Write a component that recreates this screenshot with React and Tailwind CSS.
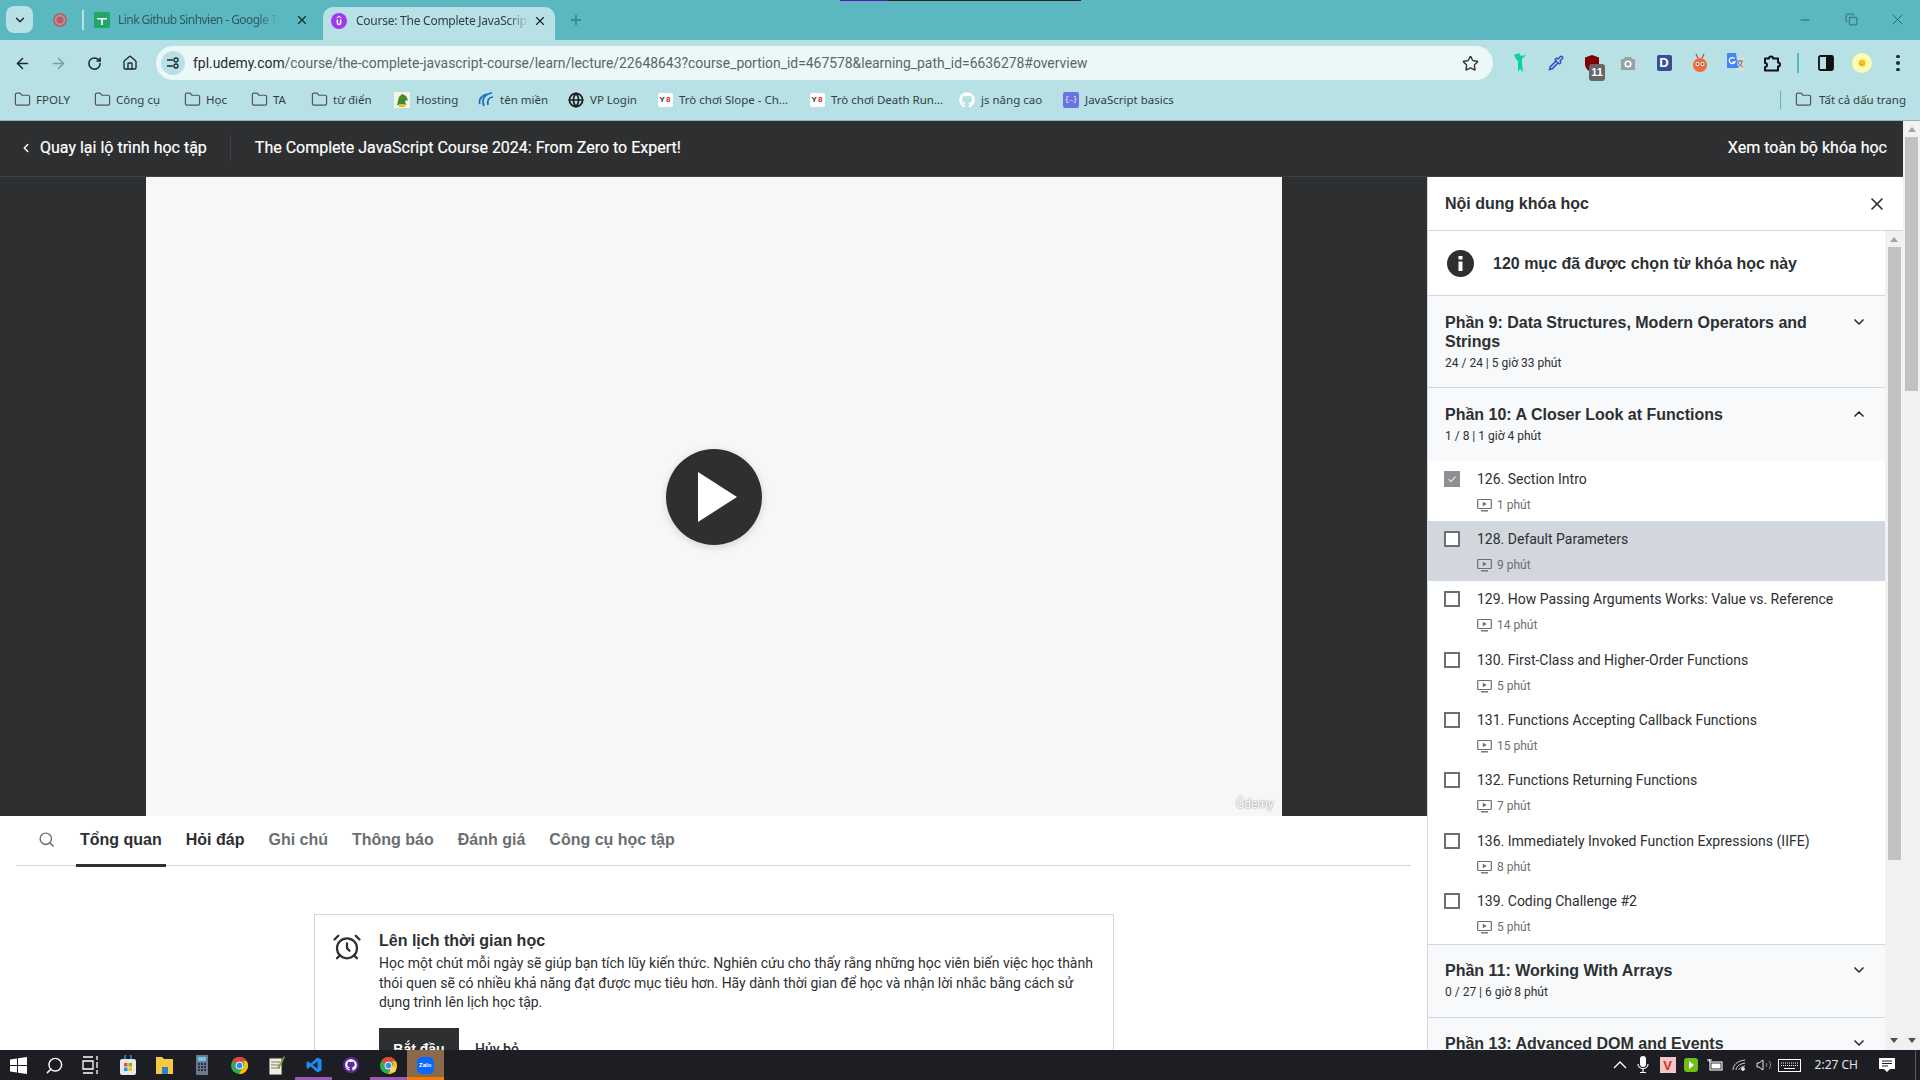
import {
  AlarmClock,
  ArrowLeft,
  ArrowRight,
  ChevronDown,
  ChevronLeft,
  ChevronUp,
  Copy,
  Folder,
  Globe,
  Home,
  Minus,
  Pipette,
  Plus,
  RotateCw,
  Search,
  Star,
  X,
} from "lucide-react";
import { FaGithub } from "react-icons/fa";

const chromeFont = "font-['Noto_Sans',sans-serif]";
const pageFont = "font-['Roboto',sans-serif]";
const boldFont = "font-['Liberation_Sans',sans-serif] font-bold";

// ================= DATA =================

const lessons = [
  { title: "126. Section Intro", time: "1 phút", done: true },
  { title: "128. Default Parameters", time: "9 phút", active: true },
  { title: "129. How Passing Arguments Works: Value vs. Reference", time: "14 phút" },
  { title: "130. First-Class and Higher-Order Functions", time: "5 phút" },
  { title: "131. Functions Accepting Callback Functions", time: "15 phút" },
  { title: "132. Functions Returning Functions", time: "7 phút" },
  { title: "136. Immediately Invoked Function Expressions (IIFE)", time: "8 phút" },
  { title: "139. Coding Challenge #2", time: "5 phút" },
];

const tabs = [
  { name: "Tổng quan", active: true },
  { name: "Hỏi đáp", dark: true },
  { name: "Ghi chú" },
  { name: "Thông báo" },
  { name: "Đánh giá" },
  { name: "Công cụ học tập" },
];

// ================= SMALL ICONS =================

function SheetsIcon() {
  return (
    <svg width="16" height="16" viewBox="0 0 16 16">
      <rect width="16" height="16" rx="1.5" fill="#23a566" />
      <path d="M3 6h10v1.5H8.8V13H7.2V7.5H3z" fill="#fff" />
    </svg>
  );
}

function UdemyTabIcon() {
  return (
    <svg width="16" height="16" viewBox="0 0 16 16">
      <circle cx="8" cy="8" r="8" fill="#a435f0" />
      <path d="M5.6 6.5v3.4a2.4 2.4 0 0 0 4.8 0V6.5h-1.5v3.3a.9.9 0 0 1-1.8 0V6.5z" fill="#fff" />
      <path d="M8 2.8 10.4 4.4v1L8 3.9 5.6 5.4v-1z" fill="#fff" />
    </svg>
  );
}

function RecordIcon() {
  return (
    <svg width="16" height="16" viewBox="0 0 16 16">
      <circle cx="8" cy="8" r="6.2" fill="none" stroke="#e5484d" strokeWidth="1.5" />
      <circle cx="8" cy="8" r="3.6" fill="#e5484d" />
    </svg>
  );
}

function SiteInfoIcon() {
  return (
    <svg width="16" height="16" viewBox="0 0 16 16" fill="none" stroke="#1f2a2c" strokeWidth="1.3">
      <path d="M2 5h6M2 11h6" />
      <circle cx="11" cy="5" r="2" />
      <circle cx="11" cy="11" r="2" />
    </svg>
  );
}

function HostingIcon() {
  return (
    <svg width="16" height="16" viewBox="0 0 16 16">
      <rect width="16" height="16" fill="#f4f4e4" />
      <path d="M3 13 5 5l3-3 4 2 2 4-3 1 1 4z" fill="#3f8a2c" />
      <path d="M5 15h6v-3H5z" fill="#d8c42a" />
    </svg>
  );
}

function DomainIcon() {
  return (
    <svg width="16" height="16" viewBox="0 0 16 16" fill="none" stroke="#1769c2" strokeWidth="1.7">
      <path d="M14 1C7 2 3 7 6 14" />
      <path d="M15 5c-4 0-6 3-5 8" />
      <path d="M9 2C4 3 0 8 2 12" />
    </svg>
  );
}

function Y8Icon() {
  return (
    <span className="flex h-[14px] w-[15px] items-center justify-center gap-[1px] rounded-[2px] bg-white font-['Liberation_Sans',sans-serif] text-[8px] leading-none font-bold">
      <span className="text-[#333]">Y</span>
      <span className="text-[#e2231a]">8</span>
    </span>
  );
}

function JsBasicsIcon() {
  return (
    <span className="flex h-4 w-4 items-center justify-center rounded-[2px] bg-[#6b73e0] font-['Liberation_Mono',monospace] text-[7px] leading-none text-white">
      {"{…}"}
    </span>
  );
}

function UblockIcon() {
  return (
    <span className="relative block h-4 w-4">
      <svg width="16" height="18" viewBox="0 0 16 18">
        <path d="M8 0 15 2.5V9c0 4-3 7-7 9-4-2-7-5-7-9V2.5z" fill="#800000" />
      </svg>
      <span className="absolute top-[9px] left-[5px] flex h-[17px] w-4 items-center justify-center rounded-[3px] bg-[#666] font-['Liberation_Sans',sans-serif] text-[11px] font-bold text-white">
        11
      </span>
    </span>
  );
}

function CameraIcon() {
  return (
    <svg width="16" height="16" viewBox="0 0 16 16">
      <path d="M5 2h6l1 2h3v11H1V4h3z" fill="#9aa0a2" />
      <circle cx="8" cy="9" r="3.6" fill="#fff" />
      <circle cx="8" cy="9" r="2" fill="#9aa0a2" />
    </svg>
  );
}

function DIcon() {
  return (
    <span className="flex h-4 w-[15px] items-center justify-center rounded-[2px] bg-[#35509b] font-['Liberation_Sans',sans-serif] text-[13px] font-bold text-white">
      D
    </span>
  );
}

function BugIcon() {
  return (
    <svg width="16" height="20" viewBox="0 0 16 20">
      <path d="M4 1l2 4M12 1l-2 4" stroke="#c9452a" strokeWidth="1.2" />
      <circle cx="8" cy="12" r="7" fill="#ef6a3d" />
      <circle cx="5.5" cy="11" r="2" fill="#fff" />
      <circle cx="10.5" cy="11" r="2" fill="#fff" />
      <circle cx="5.5" cy="11" r="1" fill="#333" />
      <circle cx="10.5" cy="11" r="1" fill="#333" />
    </svg>
  );
}

function TranslateIcon() {
  return (
    <svg width="18" height="20" viewBox="0 0 18 20">
      <path d="M8 4h9v15l-8-1z" fill="#d7dcdd" />
      <path d="M10 8h6M13 7v1M11 14c2-1 4-3 4-6M11 9c1 2 3 4 5 5" stroke="#6b7173" fill="none" />
      <path d="M0 0h9l2 15H0z" fill="#4285f4" />
      <path d="M7.5 5.5A3 3 0 1 0 8 9H5.5" stroke="#fff" strokeWidth="1.3" fill="none" />
    </svg>
  );
}

function PuzzleIcon() {
  return (
    <svg width="18" height="18" viewBox="0 0 18 18" fill="none" stroke="#111" strokeWidth="2" strokeLinejoin="round">
      <path d="M2 4.5h4a2 2 0 0 1 4 0h5v4a2 2 0 0 1 0 4v4H2V13a2 2 0 0 0 0-4z" />
    </svg>
  );
}

function SidePanelIcon() {
  return (
    <svg width="16" height="16" viewBox="0 0 16 16">
      <rect x="1" y="1" width="14" height="14" rx="1.5" fill="none" stroke="#111" strokeWidth="1.8" />
      <rect x="8" y="1" width="7" height="14" fill="#111" />
    </svg>
  );
}

function AvatarIcon() {
  return (
    <span className="flex h-5 w-5 items-center justify-center rounded-full bg-[#fdfcb4]">
      <svg width="10" height="10" viewBox="0 0 10 10">
        <circle cx="5" cy="5" r="3.5" fill="#f3c31d" />
        <path d="M4 6h2L5 7.5z" fill="#d96f1c" />
      </svg>
    </span>
  );
}

function GreenFigureIcon() {
  return (
    <svg width="14" height="20" viewBox="0 0 14 20">
      <path d="M1 2 6 0l2 3 5-1-4 4v5l1 8-3-3-2 3V8L3 6z" fill="#0bd39c" />
    </svg>
  );
}

function LessonVideoIcon() {
  return (
    <svg width="15" height="14" viewBox="0 0 15 14" fill="none">
      <rect x="0.7" y="1.5" width="13.6" height="9" rx="0.8" stroke="#6a6f73" strokeWidth="1.2" />
      <path d="M5.8 3.8 9.8 6l-4 2.2z" fill="#6a6f73" />
      <path d="M4 12.8h7" stroke="#6a6f73" strokeWidth="1.4" />
    </svg>
  );
}

// ================= BROWSER CHROME =================

function TabStrip() {
  return (
    <div className={`relative flex h-10 items-end bg-[#5cb8c0] pl-[6px] ${chromeFont}`}>
      <div className="absolute top-0 left-[840px] flex h-[1px]">
        <div className="w-12 bg-[#6a0dad]" />
        <div className="w-[193px] bg-[#222]" />
      </div>

      <div className="mb-[7px] flex h-[27px] w-[27px] items-center justify-center rounded-lg bg-[#b7e1e5]">
        <ChevronDown size={14} strokeWidth={2.5} color="#1f2a2c" />
      </div>
      <div className="mb-[7px] ml-[13px] flex h-[27px] w-[27px] items-center justify-center">
        <RecordIcon />
      </div>
      <div className="mb-[10px] ml-[9px] h-[20px] w-[2px] bg-[#b7e1e5]" />
      <div className="mb-[7px] ml-[10px] flex h-[27px] w-[229px] items-center">
        <SheetsIcon />
        <span className="ml-[8px] w-[160px] overflow-hidden text-[12px] tracking-[-0.55px] whitespace-nowrap text-[#2f5a60] [mask-image:linear-gradient(to_right,black_88%,transparent)]">
          Link Github Sinhvien - Google Trang tính
        </span>
        <X size={14} strokeWidth={2} color="#1f2a2c" className="ml-[17px]" />
      </div>
      <div className="flex h-[33px] w-[232px] items-center rounded-t-[10px] bg-[#b7e1e5] pb-[5px] pl-[8px]">
        <UdemyTabIcon />
        <span className="ml-[9px] w-[173px] overflow-hidden text-[12px] tracking-[-0.25px] whitespace-nowrap text-[#333f42] [mask-image:linear-gradient(to_right,black_88%,transparent)]">
          Course: The Complete JavaScript Course
        </span>
        <X size={14} strokeWidth={2} color="#1f2a2c" className="ml-[4px]" />
      </div>
      <div className="mb-[7px] ml-[13px] flex h-[27px] items-center">
        <Plus size={16} strokeWidth={2} color="#2f7f87" />
      </div>

      <div className="mb-[12px] ml-auto flex items-center text-[#23555a]">
        <div className="flex w-[46px] justify-center">
          <Minus size={14} strokeWidth={1.4} />
        </div>
        <div className="flex w-[46px] justify-center">
          <Copy size={13} strokeWidth={1.4} />
        </div>
        <div className="flex w-[46px] justify-center">
          <X size={17} strokeWidth={1.2} />
        </div>
      </div>
    </div>
  );
}

function Toolbar() {
  const extensions = [
    <GreenFigureIcon />,
    <Pipette size={16} color="#2b4fc7" strokeWidth={2.2} />,
    <UblockIcon />,
    <CameraIcon />,
    <DIcon />,
    <BugIcon />,
    <TranslateIcon />,
    <PuzzleIcon />,
  ];

  return (
    <div className={`flex h-10 items-center bg-[#b7e1e5] pt-[6px] ${chromeFont}`}>
      <div className="flex w-[156px] items-center pl-1">
        <div className="flex w-9 justify-center">
          <ArrowLeft size={17} strokeWidth={2.2} color="#1f2a2c" />
        </div>
        <div className="flex w-9 justify-center">
          <ArrowRight size={17} strokeWidth={2.2} color="#7f9ca0" />
        </div>
        <div className="flex w-9 justify-center">
          <RotateCw size={15} strokeWidth={2.4} color="#1f2a2c" />
        </div>
        <div className="flex w-9 justify-center">
          <Home size={16} strokeWidth={2} color="#1f2a2c" />
        </div>
      </div>

      <div className="flex h-[34px] w-[1337px] items-center rounded-full bg-[#ecf8f8] pl-[5px]">
        <div className="flex h-6 w-6 items-center justify-center rounded-full bg-[#b7e1e5]">
          <SiteInfoIcon />
        </div>
        <span className={`ml-[8px] text-[13.9px] whitespace-nowrap text-[#5a6568] ${pageFont}`}>
          <span className="text-[#1f2a2c]">fpl.udemy.com</span>
          /course/the-complete-javascript-course/learn/lecture/22648643?course_portion_id=467578&learning_path_id=6636278#overview
        </span>
        <Star size={17} strokeWidth={2} color="#333" className="mr-[14px] ml-auto" />
      </div>

      <div className="ml-[9px] flex items-center">
        {extensions.map((icon, i) => (
          <div key={i} className="flex h-6 w-[36px] items-center justify-center">
            {icon}
          </div>
        ))}
      </div>
      <div className="ml-[7px] h-[20px] w-[2px] bg-[#5cb8c0]" />
      <div className="ml-[19px] flex items-center">
        <SidePanelIcon />
      </div>
      <div className="ml-[18px] flex items-center">
        <AvatarIcon />
      </div>
      <div className="ml-[24px] flex flex-col gap-[3px]">
        <span className="h-[3.5px] w-[3.5px] rounded-full bg-[#1f2a2c]" />
        <span className="h-[3.5px] w-[3.5px] rounded-full bg-[#1f2a2c]" />
        <span className="h-[3.5px] w-[3.5px] rounded-full bg-[#1f2a2c]" />
      </div>
    </div>
  );
}

function BookmarkFolder() {
  return <Folder size={17} strokeWidth={1.7} color="#555" />;
}

function Bookmarks() {
  const items = [
    { name: "FPOLY", box: "w-[80px]", icon: <BookmarkFolder /> },
    { name: "Công cụ", box: "w-[90px]", icon: <BookmarkFolder /> },
    { name: "Học", box: "w-[67px]", icon: <BookmarkFolder /> },
    { name: "TA", box: "w-[60px]", icon: <BookmarkFolder /> },
    { name: "từ điển", box: "w-[83px]", icon: <BookmarkFolder /> },
    { name: "Hosting", box: "w-[84px]", icon: <HostingIcon /> },
    { name: "tên miền", box: "w-[90px]", icon: <DomainIcon /> },
    { name: "VP Login", box: "w-[89px]", icon: <Globe size={16} strokeWidth={2.5} color="#1c1c1c" /> },
    { name: "Trò chơi Slope - Ch...", box: "w-[152px]", icon: <Y8Icon /> },
    { name: "Trò chơi Death Run...", box: "w-[150px]", icon: <Y8Icon /> },
    { name: "js nâng cao", box: "w-[104px]", icon: <FaGithub size={16} color="#fff" /> },
    { name: "JavaScript basics", box: "w-[120px]", icon: <JsBasicsIcon /> },
  ];

  return (
    <div className={`flex h-[41px] items-center border-b border-[#93b5ba] bg-[#b7e1e5] pb-[1px] pl-[13px] ${chromeFont}`}>
      {items.map((item) => (
        <div key={item.name} className={`flex items-center gap-[5px] ${item.box}`}>
          <span className="flex w-[18px] justify-center">{item.icon}</span>
          <span className="text-[11.5px] whitespace-nowrap text-[#333f42]">{item.name}</span>
        </div>
      ))}
      <div className="ml-auto h-[18px] w-[1.5px] bg-[#5cb8c0]" />
      <div className="mr-[14px] ml-[14px] flex items-center gap-[7px]">
        <BookmarkFolder />
        <span className="text-[11.5px] whitespace-nowrap text-[#333f42]">Tất cả dấu trang</span>
      </div>
    </div>
  );
}

// ================= PAGE =================

function Scrollbar({ thumb, width }) {
  return (
    <div className={`flex shrink-0 flex-col items-center bg-[#f1f1f1] ${width}`}>
      <div className="mt-[6px] mb-[5px] h-0 w-0 border-x-[4px] border-b-[5px] border-x-transparent border-b-[#a3a3a3]" />
      <div className={`w-[13px] bg-[#c1c1c1] ${thumb}`} />
      <div className="mt-auto mb-[7px] h-0 w-0 border-x-[4px] border-t-[5px] border-x-transparent border-t-[#505050]" />
    </div>
  );
}

function PageHeader() {
  return (
    <header className={`flex h-[56px] shrink-0 items-center border-b border-[#3e4143] bg-[#2d2f31] pb-[2px] text-white ${pageFont}`}>
      <ChevronLeft size={14} strokeWidth={2.5} className="ml-[19px]" />
      <span className="ml-[7px] text-[16px] whitespace-nowrap [-webkit-text-stroke:0.2px_white]">Quay lại lộ trình học tập</span>
      <div className="ml-[23px] h-[26px] w-[1px] bg-[#3e4143]" />
      <span className="ml-[24px] text-[16px] whitespace-nowrap [-webkit-text-stroke:0.2px_white]">
        The Complete JavaScript Course 2024: From Zero to Expert!
      </span>
      <span className="mr-[16px] ml-auto text-[16px] whitespace-nowrap [-webkit-text-stroke:0.2px_white]">Xem toàn bộ khóa học</span>
    </header>
  );
}

function VideoArea() {
  return (
    <div className="flex h-[639px] shrink-0 justify-center bg-[#2d2f31]">
      <div className="relative flex w-[1136px] items-center justify-center bg-[#f7f7f7]">
        <div className="flex h-24 w-24 items-center justify-center rounded-full bg-[#2d2f31] shadow-[0_2px_8px_rgba(0,0,0,0.15)]">
          <svg width="40" height="50" viewBox="0 0 40 50" className="ml-[9px]">
            <path d="M0 0 39 25 0 50z" fill="#fff" />
          </svg>
        </div>
        <span className="absolute right-[8px] bottom-[3px] text-[12px] text-white [text-shadow:0_0_2px_rgba(0,0,0,0.6)]">
          Ûdemy
        </span>
      </div>
    </div>
  );
}

function CourseTabs() {
  return (
    <div className="mx-4 flex h-[50px] shrink-0 items-stretch gap-4 border-b-[1.5px] border-[#d1d7dc]">
      <div className="flex w-[44px] items-center pb-[3px] pl-[22px]">
        <Search size={17} strokeWidth={2} color="#6a6f73" className="shrink-0" />
      </div>
      {tabs.map((tab) => (
        <div
          key={tab.name}
          className={`-mb-[2px] flex items-center justify-center border-b-[3px] px-1 text-[16px] whitespace-nowrap ${boldFont} ${
            tab.active || tab.dark ? "text-[#2d2f31]" : "text-[#6a6f73]"
          } ${tab.active ? "border-[#2d2f31]" : "border-transparent"}`}
        >
          {tab.name}
        </div>
      ))}
    </div>
  );
}

function ScheduleCard() {
  return (
    <div className="mt-[48px] ml-[314px] flex w-[800px] shrink-0 border border-[#d1d7dc] pt-[16px] pl-[17px]">
      <AlarmClock size={30} strokeWidth={1.8} color="#2d2f31" className="mt-[1px] shrink-0" />
      <div className="ml-[17px] w-[722px]">
        <h3 className={`text-[16px] leading-[20px] text-[#2d2f31] ${boldFont}`}>Lên lịch thời gian học</h3>
        <p className="mt-[3px] text-[14px] leading-[19.6px] tracking-[-0.025px] text-[#2d2f31]">
          Học một chút mỗi ngày sẽ giúp bạn tích lũy kiến thức. Nghiên cứu cho thấy rằng những học viên biến việc học
          thành thói quen sẽ có nhiều khả năng đạt được mục tiêu hơn. Hãy dành thời gian để học và nhận lời nhắc bằng
          cách sử dụng trình lên lịch học tập.
        </p>
        <div className="mt-[15px] flex items-center">
          <div className={`flex h-[44px] w-[80px] items-center justify-center bg-[#2d2f31] text-[14px] text-white ${boldFont}`}>
            Bắt đầu
          </div>
          <span className="ml-4 text-[14px] font-medium text-[#2d2f31]">Hủy bỏ</span>
        </div>
      </div>
    </div>
  );
}

function SectionHead({ title, meta, open, box, pad = "pt-[17px]" }) {
  const Chevron = open ? ChevronUp : ChevronDown;
  return (
    <div className={`flex shrink-0 bg-[#f7f9fa] pr-[18px] pl-[17px] ${pad} ${box}`}>
      <div className="w-[400px] min-w-0 grow">
        <h4 className={`text-[16px] leading-[19px] text-[#2d2f31] ${boldFont}`}>{title}</h4>
        <p className="mt-[3px] text-[12px] leading-[18px] text-[#2d2f31]">{meta}</p>
      </div>
      <Chevron size={16} strokeWidth={2.5} color="#2d2f31" className="mt-[1px] shrink-0" />
    </div>
  );
}

function LessonRow({ lesson }) {
  return (
    <div className={`flex h-[60.4px] shrink-0 pt-[10px] pl-[16px] ${lesson.active ? "bg-[#d1d7dc]" : "bg-white"}`}>
      <div
        className={`flex h-4 w-4 shrink-0 items-center justify-center border-2 ${
          lesson.done ? "border-[#8c9094] bg-[#8c9094]" : "border-[#6a6f73] bg-white"
        }`}
      >
        {lesson.done && (
          <svg width="10" height="10" viewBox="0 0 10 10" fill="none" stroke="#dcdcdc" strokeWidth="1.3">
            <path d="M1.5 5.2 4 7.5 8.5 2.5" />
          </svg>
        )}
      </div>
      <div className="ml-[17px]">
        <p className="text-[14px] leading-[16px] whitespace-nowrap text-[#2d2f31]">{lesson.title}</p>
        <div className="mt-[11px] flex items-center gap-[5px]">
          <LessonVideoIcon />
          <span className="text-[12px] leading-[14px] text-[#6a6f73]">{lesson.time}</span>
        </div>
      </div>
    </div>
  );
}

function CourseSidebar() {
  return (
    <aside className={`flex w-[476px] shrink-0 flex-col border-l border-[#d1d7dc] bg-white ${pageFont}`}>
      <div className="flex h-[54px] shrink-0 items-center justify-between border-b-[1.5px] border-[#d1d7dc] pr-[16px] pl-[17px]">
        <h2 className={`text-[16px] text-[#2d2f31] ${boldFont}`}>Nội dung khóa học</h2>
        <X size={20} strokeWidth={2} color="#2d2f31" />
      </div>
      <div className="flex min-h-0 flex-1">
        <div className="flex min-w-0 flex-1 flex-col overflow-hidden">
          <div className="flex h-[65px] shrink-0 items-center border-b-[1.5px] border-[#d1d7dc] pt-[1px] pl-[19px]">
            <span className="flex h-[27px] w-[27px] items-center justify-center rounded-full bg-[#2d2f31]">
              <svg width="5" height="15" viewBox="0 0 5 15" fill="#fff">
                <rect x="0.5" y="0" width="4" height="3.5" />
                <rect x="0.5" y="5.5" width="4" height="9.5" />
              </svg>
            </span>
            <span className={`ml-[19px] text-[16px] text-[#2d2f31] ${boldFont}`}>120 mục đã được chọn từ khóa học này</span>
          </div>
          <SectionHead
            title="Phần 9: Data Structures, Modern Operators and Strings"
            meta="24 / 24 | 5 giờ 33 phút"
            box="h-[92px] border-b-[1.5px] border-[#d1d7dc]"
          />
          <SectionHead title="Phần 10: A Closer Look at Functions" meta="1 / 8 | 1 giờ 4 phút" open box="h-[72.5px]" />
          {lessons.map((lesson) => (
            <LessonRow key={lesson.title} lesson={lesson} />
          ))}
          <div className="h-[1px] shrink-0 bg-[#d1d7dc]" />
          <SectionHead
            title="Phần 11: Working With Arrays"
            meta="0 / 27 | 6 giờ 8 phút"
            pad="pt-[16px]"
            box="h-[73px] border-b-[1.5px] border-[#d1d7dc]"
          />
          <SectionHead title="Phần 13: Advanced DOM and Events" meta="0 / 33 | 6 giờ 52 phút" pad="pt-[16px]" box="h-[73px]" />
        </div>
        <Scrollbar width="w-[18px]" thumb="h-[613px]" />
      </div>
    </aside>
  );
}

// ================= TASKBAR =================

function WindowsLogo() {
  return (
    <svg width="17" height="17" viewBox="0 0 17 17" fill="#fff">
      <path d="M0 2.4 7 1.4V8H0zM8 1.2 17 0v8H8zM0 9h7v6.6l-7-1zM8 9h9v8l-9-1.2z" />
    </svg>
  );
}

function ChromeLogo({ badge }) {
  return (
    <svg width="17" height="17" viewBox="0 0 17 17">
      <circle cx="8.5" cy="8.5" r="8.5" fill="#34a853" />
      <path d="M8.5 0a8.5 8.5 0 0 1 7.4 4.25H8.5A4.25 4.25 0 0 0 4.7 6.6L1.6 3.5A8.5 8.5 0 0 1 8.5 0z" fill="#ea4335" />
      <path d="M15.9 4.25A8.5 8.5 0 0 1 8 17l3.7-6.5a4.25 4.25 0 0 0 0-6.25z" fill="#fbbc05" />
      <circle cx="8.5" cy="8.5" r="3.5" fill="#4285f4" stroke="#fff" />
      {badge && <circle cx="13" cy="12.5" r="3" fill="#f5d76e" />}
    </svg>
  );
}

function TaskbarIcons() {
  const cell = "flex h-full w-[37.2px] shrink-0 items-center justify-center";
  return (
    <>
      <div className="flex h-full w-9 shrink-0 items-center justify-center">
        <WindowsLogo />
      </div>
      <div className="flex h-full w-9 shrink-0 items-center justify-center">
        <Search size={19} strokeWidth={1.8} color="#fff" className="-scale-x-100" />
      </div>
      <div className={cell}>
        <svg width="17" height="20" viewBox="0 0 17 20" fill="none" stroke="#fff" strokeWidth="1.3">
          <path d="M1 2h10M1 18h10M1 6h10v8H1zM15 1v4M15 7v6M15 15v4" />
        </svg>
      </div>
      <div className={cell}>
        <svg width="16" height="20" viewBox="0 0 16 20">
          <rect y="4" width="16" height="16" rx="2" fill="#e8e8e8" />
          <path d="M5 4V2a3 3 0 0 1 6 0v2" stroke="#27a6e5" strokeWidth="1.3" fill="none" />
          <rect x="4" y="8" width="3.5" height="3.5" fill="#f25022" />
          <rect x="8.5" y="8" width="3.5" height="3.5" fill="#7fba00" />
          <rect x="4" y="12.5" width="3.5" height="3.5" fill="#00a4ef" />
          <rect x="8.5" y="12.5" width="3.5" height="3.5" fill="#ffb900" />
        </svg>
      </div>
      <div className={cell}>
        <svg width="17" height="17" viewBox="0 0 17 17">
          <path d="M0 0h6l2 2h9v15H0z" fill="#f5c944" />
          <rect x="6" y="10" width="6" height="7" fill="#2f80c8" />
        </svg>
      </div>
      <div className={cell}>
        <svg width="12" height="20" viewBox="0 0 12 20">
          <rect width="12" height="20" rx="1" fill="#6a7a8c" />
          <rect x="2" y="2" width="8" height="4" fill="#6fc7ea" />
          <path d="M2 8h2v2H2zM5 8h2v2H5zM8 8h2v2H8zM2 11h2v2H2zM5 11h2v2H5zM8 11h2v2H8zM2 14h2v2H2zM5 14h2v2H5zM8 14h2v2H8z" fill="#2b3442" />
        </svg>
      </div>
      <div className={cell}>
        <ChromeLogo />
      </div>
      <div className={cell}>
        <svg width="16" height="20" viewBox="0 0 16 20">
          <rect y="3" width="13" height="17" fill="#f2f0df" stroke="#333" />
          <path d="M2 7h9M2 10h9M2 13h9" stroke="#777" />
          <path d="M8 13 15 1l1 1-6 12z" fill="#7aa33a" />
        </svg>
      </div>
      <div className={`${cell} border-b-[3px] border-[#9b59b6] pt-[3px]`}>
        <svg width="16" height="16" viewBox="0 0 100 100">
          <path d="M71 3 30 41 12 27 3 32v36l9 5 18-14 41 38 26-12V15zM72 28v44L42 50z" fill="#1b8ceb" />
        </svg>
      </div>
      <div className={cell}>
        <span className="flex h-4 w-4 items-center justify-center rounded-full bg-[#5f2a9a]">
          <FaGithub size={12} color="#fff" />
        </span>
      </div>
      <div className={`${cell} border-b-[3px] border-[#9b59b6] pt-[3px]`}>
        <ChromeLogo badge />
      </div>
      <div className={`${cell} border-b-[3px] border-[#f57c00] bg-[#8a6a4c] pt-[3px]`}>
        <span className="flex h-[17px] w-[17px] items-center justify-center rounded-[5px] bg-[#0a68ff] font-['Liberation_Sans',sans-serif] text-[6px] font-bold text-white">
          Zalo
        </span>
      </div>
    </>
  );
}

function Tray() {
  return (
    <div className="flex h-full items-center text-white">
      <svg width="14" height="8" viewBox="0 0 14 8" fill="none" stroke="#fff" strokeWidth="1.3" className="mr-[10px]">
        <path d="M1 7 7 1l6 6" />
      </svg>
      <svg width="12" height="18" viewBox="0 0 12 18" className="mr-[11px]">
        <rect x="3" y="0" width="6" height="11" rx="3" fill="#fff" />
        <path d="M1 8c0 6 10 6 10 0M6 13v3M3 16.5h6" stroke="#fff" fill="none" strokeWidth="1.2" />
      </svg>
      <span className="mr-[8px] flex h-4 w-4 items-center justify-center bg-[#f4c6c6] font-['Liberation_Sans',sans-serif] text-[13px] leading-none font-bold text-[#d22b2b]">
        V
      </span>
      <svg width="14" height="14" viewBox="0 0 14 14" className="mr-[9px]">
        <rect width="14" height="14" rx="3" fill="#6dbe16" />
        <path d="M5 3 10 7 5 11z" fill="#fff" />
      </svg>
      <svg width="16" height="12" viewBox="0 0 16 12" fill="none" stroke="#fff" strokeWidth="1.1" className="mr-[9px]">
        <rect x="3" y="3" width="12" height="8" />
        <rect x="5" y="5" width="8" height="4" fill="#fff" />
        <path d="M0 1h5M2.5 0v3" />
      </svg>
      <svg width="14" height="12" viewBox="0 0 14 12" fill="none" stroke="#d5d5d5" strokeWidth="1" className="mr-[10px]">
        <path d="M1 11c0-5 4-9 12-10M4 11c0-3 3-6 9-7M7 11c0-2 2-3 6-4" />
        <circle cx="11" cy="10" r="1.5" fill="#fff" />
      </svg>
      <svg width="16" height="12" viewBox="0 0 16 12" fill="none" stroke="#e5e5e5" className="mr-[6px]">
        <path d="M1 4h2l4-3v10L3 8H1z" />
        <path d="M10 4c1 1 1 3 0 4M13 2c2 2 2 6 0 8" stroke="#8a8a8a" />
      </svg>
      <svg width="23" height="13" viewBox="0 0 23 13" fill="none" stroke="#fff" className="mr-[14px]">
        <rect x="0.5" y="0.5" width="22" height="12" />
        <path d="M3 4h17M3 6.5h17" strokeDasharray="1 1" />
        <path d="M6 9.5h11" />
      </svg>
      <span className={`mr-[21px] text-[12px] whitespace-nowrap text-[#e5e5e5] ${chromeFont}`}>2:27 CH</span>
      <svg width="16" height="16" viewBox="0 0 16 16" className="mr-[20px]">
        <path d="M0 1h16v11h-5l-3 3-3-3H0z" fill="#fff" />
        <path d="M3 4h10M3 6.5h10M3 9h6" stroke="#1c1e24" />
      </svg>
      <div className="mr-[4px] h-full w-[1px] bg-[#5a5d63]" />
    </div>
  );
}

// ================= APP =================

export default function App() {
  return (
    <div className="flex h-screen w-screen flex-col overflow-hidden bg-white">
      <TabStrip />
      <Toolbar />
      <Bookmarks />

      <div className="flex min-h-0 flex-1">
        <div className="flex min-w-0 flex-1 flex-col">
          <PageHeader />
          <div className="flex min-h-0 flex-1">
            <main className={`flex w-[1427px] shrink-0 flex-col overflow-hidden ${pageFont}`}>
              <VideoArea />
              <CourseTabs />
              <ScheduleCard />
            </main>
            <CourseSidebar />
          </div>
        </div>
        <Scrollbar width="w-[17px]" thumb="h-[254px]" />
      </div>

      <footer className="flex h-[30px] shrink-0 items-center justify-between bg-[#1c1e24]">
        <div className="flex h-full items-center">
          <TaskbarIcons />
        </div>
        <Tray />
      </footer>
    </div>
  );
}
